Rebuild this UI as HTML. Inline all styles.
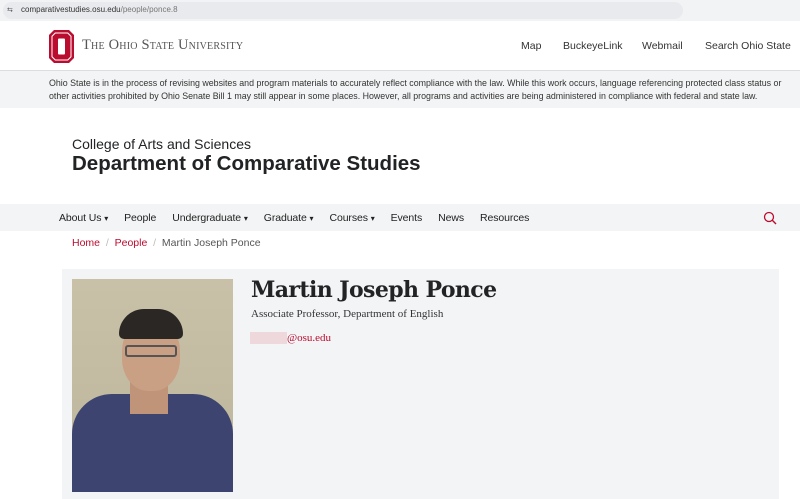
<!DOCTYPE html>
<html><head><meta charset="utf-8"><style>
*{margin:0;padding:0;box-sizing:border-box}
body{width:800px;height:499px;overflow:hidden;background:#fff;font-family:"Liberation Sans",sans-serif;color:#212325;position:relative}
.abs{position:absolute}
</style></head><body>
<div class="abs" style="left:0;top:0;width:800px;height:21px;background:#f1f3f4"></div>
<div class="abs" style="left:3px;top:2px;width:680px;height:17px;background:#e8eaed;border-radius:9px"></div>
<div class="abs" style="left:7px;top:6px;font-size:7px;color:#555">⇆</div>
<div class="abs" style="left:21px;top:5px;font-size:8px;color:#333">comparativestudies.osu.edu<span style="color:#777">/people/ponce.8</span></div>

<svg class="abs" style="left:49px;top:30px" width="25" height="33" viewBox="0 0 25 33"><path d="M5 0H20L25 5V28L20 33H5L0 28V5Z" fill="#ba0c2f"/><path d="M6 2.5H19L22.5 6V27L19 30.5H6L2.5 27V6Z" fill="#fff"/><path d="M6.5 3.5H18.5L21.5 6.5V26.5L18.5 29.5H6.5L3.5 26.5V6.5Z" fill="#ba0c2f"/><rect x="9" y="8.5" width="7" height="16" fill="#fff" rx="1"/></svg>
<div class="abs" style="left:82px;top:37px;font-family:'Liberation Serif',serif;font-size:14.5px;color:#555;letter-spacing:0.2px;font-variant:small-caps">The Ohio State University</div>
<div class="abs" style="left:521px;top:40px;font-size:10.5px;color:#333">Map</div>
<div class="abs" style="left:563px;top:40px;font-size:10.5px;color:#333">BuckeyeLink</div>
<div class="abs" style="left:642px;top:40px;font-size:10.5px;color:#333">Webmail</div>
<div class="abs" style="left:705px;top:40px;font-size:10.5px;color:#333">Search Ohio State</div>

<div class="abs" style="left:0;top:70px;width:800px;height:38px;background:#f3f4f5;border-top:1px solid #ddd"></div>
<div class="abs" style="left:49px;top:77px;width:750px;font-size:8.85px;line-height:13px;color:#333;white-space:nowrap">Ohio State is in the process of revising websites and program materials to accurately reflect compliance with the law. While this work occurs, language referencing protected class status or<br>other activities prohibited by Ohio Senate Bill 1 may still appear in some places. However, all programs and activities are being administered in compliance with federal and state law.</div>

<div class="abs" style="left:72px;top:136px;font-size:14px;color:#212325">College of Arts and Sciences</div>
<div class="abs" style="left:72px;top:152px;font-size:20.5px;font-weight:bold;color:#212325">Department of Comparative Studies</div>

<div class="abs" style="left:0;top:204px;width:800px;height:27px;background:#f3f4f5"></div>
<div class="abs" style="left:59px;top:212px;font-size:10.5px;color:#222;white-space:nowrap;letter-spacing:-0.1px">
<span style="margin-right:16px">About Us <span style="font-size:8px">▾</span></span><span style="margin-right:16px">People</span><span style="margin-right:16px">Undergraduate <span style="font-size:8px">▾</span></span><span style="margin-right:16px">Graduate <span style="font-size:8px">▾</span></span><span style="margin-right:16px">Courses <span style="font-size:8px">▾</span></span><span style="margin-right:16px">Events</span><span style="margin-right:16px">News</span><span>Resources</span></div>
<svg class="abs" style="left:763px;top:211px" width="14" height="14" viewBox="0 0 14 14"><circle cx="6" cy="6" r="4.5" fill="none" stroke="#ba0c2f" stroke-width="1.3"/><path d="M9.3 9.3L13 13" stroke="#ba0c2f" stroke-width="1.4"/></svg>

<div class="abs" style="left:72px;top:237px;font-size:10.5px;color:#555"><span style="color:#ba0c2f">Home</span> <span style="color:#bbb">&nbsp;/&nbsp;</span> <span style="color:#ba0c2f">People</span> <span style="color:#bbb">&nbsp;/&nbsp;</span> Martin Joseph Ponce</div>

<div class="abs" style="left:62px;top:269px;width:717px;height:230px;background:#f3f4f6"></div>
<div class="abs" style="left:72px;top:279px;width:161px;height:213px;background:linear-gradient(180deg,#c8c1a8,#bdb59b);overflow:hidden">
<div class="abs" style="left:0;top:115px;width:161px;height:100px;background:#3d4470;border-radius:40px 40px 0 0"></div>
<div class="abs" style="left:58px;top:95px;width:38px;height:40px;background:#c09478"></div>
<div class="abs" style="left:50px;top:40px;width:58px;height:72px;background:#c9a084;border-radius:45%"></div>
<div class="abs" style="left:47px;top:30px;width:64px;height:30px;background:#2b2725;border-radius:30px 30px 6px 6px"></div>
<div class="abs" style="left:53px;top:66px;width:52px;height:12px;border:2px solid #555;border-radius:3px"></div>
</div>
<div class="abs" style="left:251px;top:277px;font-family:'DejaVu Serif','Liberation Serif',serif;font-weight:bold;font-size:22px;color:#212325;letter-spacing:-0.6px">Martin Joseph Ponce</div>
<div class="abs" style="left:251px;top:308px;font-family:'Liberation Serif',serif;font-size:11px;color:#333">Associate Professor, Department of English</div>
<div class="abs" style="left:250px;top:332px;width:37px;height:12px;background:#efd8dc"></div>
<div class="abs" style="left:287px;top:332px;font-family:'Liberation Serif',serif;font-size:11px;color:#ba0c2f">@osu.edu</div>
</body></html>
